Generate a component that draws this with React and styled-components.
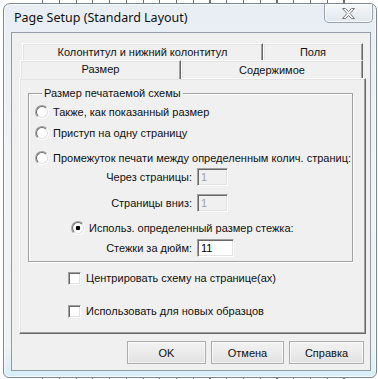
import styled, { createGlobalStyle, css } from "styled-components";

const GlobalStyle = createGlobalStyle`
  html, body {
    margin: 0;
    padding: 0;
  }
  body {
    width: 378px;
    height: 379px;
    overflow: hidden;
    background-color: #fff;
    background-image: repeating-linear-gradient(90deg, #707070 0 1px, transparent 1px 16.75px);
    background-size: 303px 100%;
    background-position: 42px 0;
    background-repeat: no-repeat;
    font-family: "Liberation Sans", Arial, sans-serif;
  }
`;

const Screen = styled.div`
  width: 378px;
  height: 379px;
  box-sizing: border-box;
  padding: 3px 1px 1px 3px;
  display: flex;
`;

const Window = styled.div`
  flex: 1;
  display: flex;
  flex-direction: column;
  padding: 0 5px 6px 7px;
  border: 1px solid #7d8791;
  border-radius: 7px 7px 6px 6px;
  background: linear-gradient(180deg, #e8eef4 0%, #f1f4f7 45%, #eef3f6 92%, #d6eef7 100%);
  box-shadow: inset 0 0 0 1px rgba(255, 255, 255, 0.75);
`;

const TitleBar = styled.div`
  height: 28px;
  display: flex;
  align-items: flex-start;
  padding-left: 3px;
  margin-right: -2px;
`;

const Title = styled.div`
  flex: 1;
  line-height: 27px;
  font-family: "Noto Sans", "Open Sans", sans-serif;
  font-size: 12.5px;
  color: #111;
`;

const CloseButton = styled.div`
  width: 47px;
  height: 18px;
  display: flex;
  align-items: center;
  justify-content: center;
  border: 1px solid #9aa3ad;
  border-top: none;
  border-radius: 0 0 5px 5px;
  background: linear-gradient(180deg, #f4f7fa 0%, #e9eef3 60%, #dfe7ee 100%);
  box-shadow: inset 0 0 0 1px rgba(255, 255, 255, 0.8);
`;

const Client = styled.div`
  flex: 1;
  display: flex;
  flex-direction: column;
  padding: 10px 4px 6px 7px;
  border: 1px solid #929ca6;
  background: #f0f0f0;
  font-size: 11px;
  color: #111;
`;

const TabRow = styled.div`
  display: flex;
  height: ${p => p.$h}px;
  padding: 0 3px;
`;

const Tab = styled.div`
  flex: ${p => (p.$w ? `0 0 ${p.$w}px` : 1)};
  display: flex;
  align-items: center;
  justify-content: center;
  white-space: nowrap;
  background: #f0f0f0;
  border: 1px solid;
  border-bottom: none;
  border-color: #fff #696969 transparent #fff;
  box-shadow: inset -1px 0 #a0a0a0, inset 1px 1px #e3e3e3;
  ${p =>
    p.$active &&
    css`
      margin-left: -2px;
      height: 19px;
      margin-bottom: -1px;
      align-items: flex-start;
      padding-top: 2px;
      position: relative;
      z-index: 1;
      box-sizing: border-box;
    `}
`;

const Panel = styled.div`
  flex: 1;
  display: flex;
  flex-direction: column;
  padding: 8px 12px 0 8px;
  border: 1px solid;
  border-color: #fff #696969 #696969 #fff;
  box-shadow: inset -1px -1px #a0a0a0, inset 1px 1px #e3e3e3;
`;

const Group = styled.fieldset`
  margin: 0;
  min-width: 0;
  padding: 0 0 4px 6px;
  border: 1px solid #a0a0a0;
  box-shadow: inset 1px 1px #fff, 1px 1px #fff;
  display: flex;
  flex-direction: column;
`;

const Legend = styled.legend`
  margin-left: 7px;
  padding: 0 2px;
  line-height: 13px;
  background: #f0f0f0;
`;

const Row = styled.div`
  display: flex;
  align-items: center;
  white-space: nowrap;
  height: ${p => p.$h || 20}px;
  margin-top: ${p => p.$mt || 0}px;
  padding-left: ${p => p.$indent || 0}px;
`;

const Radio = styled.span`
  width: 12px;
  height: 12px;
  flex: none;
  border-radius: 50%;
  border: 1px solid;
  border-color: #a0a0a0 #fff #fff #a0a0a0;
  display: flex;
  margin-right: 4px;
  &::before {
    content: "";
    flex: 1;
    border-radius: 50%;
    border: 1px solid;
    border-color: #696969 #e3e3e3 #e3e3e3 #696969;
    background: ${p =>
      p.$checked
        ? "radial-gradient(circle, #000 0 2px, #fff 2.6px)"
        : "#fff"};
  }
`;

const Check = styled.span`
  width: 11px;
  height: 11px;
  flex: none;
  border: 1px solid;
  border-color: #a0a0a0 #fff #fff #a0a0a0;
  box-shadow: inset 1px 1px #696969, inset -1px -1px #e3e3e3;
  background: #fff;
  margin-right: 5px;
`;

const FieldLabel = styled.span`
  width: 157px;
  text-align: right;
  padding-right: 5px;
`;

const Input = styled.div`
  width: ${p => p.$w}px;
  height: 18px;
  box-sizing: border-box;
  padding: 2px 0 0 3px;
  border: 1px solid;
  border-color: #a0a0a0 #fff #fff #a0a0a0;
  box-shadow: inset 1px 1px #696969, inset -1px -1px #e3e3e3;
  background: ${p => (p.$disabled ? "#f0f0f0" : "#fff")};
  color: ${p => (p.$disabled ? "#a0a0a0" : "#000")};
  line-height: 13px;
`;

const ButtonBar = styled.div`
  display: flex;
  justify-content: flex-end;
  gap: 5px;
  margin-top: 7px;
  padding-right: 2px;
`;

const Button = styled.div`
  width: ${p => p.$w}px;
  height: 23px;
  box-sizing: border-box;
  display: flex;
  align-items: center;
  justify-content: center;
  border: 1px solid #adadad;
  background: linear-gradient(180deg, #f2f2f2 0%, #ebebeb 50%, #e1e1e1 100%);
  box-shadow: inset 0 0 0 1px rgba(255, 255, 255, 0.6);
`;

const CloseGlyph = () => (
  <svg width="13" height="11" viewBox="0 0 13 11">
    <path
      d="M0.5 0.5H3.5L6.5 3.5L9.5 0.5H12.5L8 5.5L12.5 10.5H9.5L6.5 7.5L3.5 10.5H0.5L5 5.5Z"
      fill="#f7f7f7"
      stroke="#7b7b7b"
      strokeWidth="1"
      strokeLinejoin="round"
    />
  </svg>
);

export default function App() {
  return (
    <>
      <GlobalStyle />
      <Screen>
        <Window>
          <TitleBar>
            <Title>Page Setup (Standard Layout)</Title>
            <CloseButton>
              <CloseGlyph />
            </CloseButton>
          </TitleBar>
          <Client>
            <TabRow $h={17}>
              <Tab $w={239}>Колонтитул и нижний колонтитул</Tab>
              <Tab>Поля</Tab>
            </TabRow>
            <TabRow $h={18}>
              <Tab $w={161} $active>
                Размер
              </Tab>
              <Tab>Содержимое</Tab>
            </TabRow>
            <Panel>
              <Group>
                <Legend>Размер печатаемой схемы</Legend>
                <Row $mt={2}>
                  <Radio />
                  Также, как показанный размер
                </Row>
                <Row $mt={1}>
                  <Radio />
                  Приступ на одну страницу
                </Row>
                <Row $mt={5}>
                  <Radio />
                  Промежуток печати между определенным колич. страниц:
                </Row>
                <Row $h={18}>
                  <FieldLabel>Через страницы:</FieldLabel>
                  <Input $w={31} $disabled>1</Input>
                </Row>
                <Row $h={18} $mt={8}>
                  <FieldLabel>Страницы вниз:</FieldLabel>
                  <Input $w={31} $disabled>1</Input>
                </Row>
                <Row $mt={6} $indent={36}>
                  <Radio $checked />
                  Использ. определенный размер стежка:
                </Row>
                <Row $h={18} $mt={1}>
                  <FieldLabel>Стежки за дюйм:</FieldLabel>
                  <Input $w={37}>11</Input>
                </Row>
              </Group>
              <Row $h={16} $mt={8} $indent={40}>
                <Check />
                Центрировать схему на странице(ах)
              </Row>
              <Row $h={16} $mt={17} $indent={40}>
                <Check />
                Использовать для новых образцов
              </Row>
            </Panel>
            <ButtonBar>
              <Button $w={79}>OK</Button>
              <Button $w={73}>Отмена</Button>
              <Button $w={75}>Справка</Button>
            </ButtonBar>
          </Client>
        </Window>
      </Screen>
    </>
  );
}
